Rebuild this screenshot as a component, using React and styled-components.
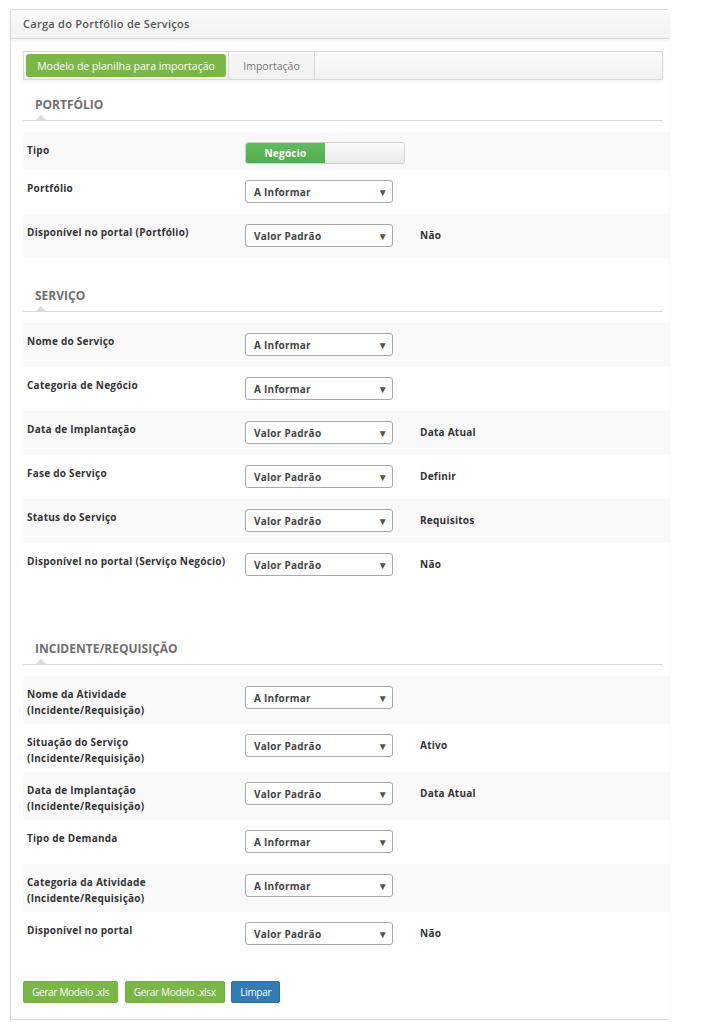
import styled, { createGlobalStyle } from "styled-components";

const GlobalStyle = createGlobalStyle`
    body {
        margin: 0;
        background: #fff;
        font-family: "Open Sans", "Liberation Sans", sans-serif;
    }
`;

const secoes = [
    {
        titulo: "PORTFÓLIO",
        topo: 17,
        linhas: [
            { label: "Tipo", toggle: true },
            { label: "Portfólio", valor: "A Informar" },
            { label: "Disponível no portal (Portfólio)", valor: "Valor Padrão", extra: "Não" },
        ],
    },
    {
        titulo: "SERVIÇO",
        topo: 30,
        linhas: [
            { label: "Nome do Serviço", valor: "A Informar" },
            { label: "Categoria de Negócio", valor: "A Informar" },
            { label: "Data de Implantação", valor: "Valor Padrão", extra: "Data Atual" },
            { label: "Fase do Serviço", valor: "Valor Padrão", extra: "Definir" },
            { label: "Status do Serviço", valor: "Valor Padrão", extra: "Requisitos" },
            { label: "Disponível no portal (Serviço Negócio)", valor: "Valor Padrão", extra: "Não" },
        ],
    },
    {
        titulo: "INCIDENTE/REQUISIÇÃO",
        topo: 54,
        linhas: [
            { label: ["Nome da Atividade", "(Incidente/Requisição)"], valor: "A Informar" },
            { label: ["Situação do Serviço", "(Incidente/Requisição)"], valor: "Valor Padrão", extra: "Ativo" },
            { label: ["Data de Implantação", "(Incidente/Requisição)"], valor: "Valor Padrão", extra: "Data Atual" },
            { label: "Tipo de Demanda", valor: "A Informar" },
            { label: ["Categoria da Atividade", "(Incidente/Requisição)"], valor: "A Informar" },
            { label: "Disponível no portal", valor: "Valor Padrão", extra: "Não" },
        ],
    },
];

function Linha({ linha, cinza }) {
    const partes = Array.isArray(linha.label) ? linha.label : [linha.label];
    return (
        <Row $cinza={cinza}>
            <Label>
                {partes.map((p) => <span key={p}>{p}</span>)}
            </Label>
            {linha.toggle ? (
                <Toggle>
                    <ToggleOn>Negócio</ToggleOn>
                    <ToggleOff />
                </Toggle>
            ) : (
                <Select>
                    <span>{linha.valor}</span>
                    <Seta>▼</Seta>
                </Select>
            )}
            {linha.extra && <Extra>{linha.extra}</Extra>}
        </Row>
    );
}

export default function App() {
    return (
        <>
            <GlobalStyle />
            <Painel>
                <Cabecalho>Carga do Portfólio de Serviços</Cabecalho>
                <Corpo>
                    <Abas>
                        <Aba>
                            <AbaBotao $ativa $largura={200}>Modelo de planilha para importação</AbaBotao>
                        </Aba>
                        <Aba>
                            <AbaBotao $largura={81}>Importação</AbaBotao>
                        </Aba>
                    </Abas>
                    {secoes.map((s) => (
                        <section key={s.titulo}>
                            <TituloSecao $topo={s.topo}>{s.titulo}</TituloSecao>
                            <Linhas>
                                {s.linhas.map((l, i) => (
                                    <Linha key={i} linha={l} cinza={i % 2 === 0} />
                                ))}
                            </Linhas>
                        </section>
                    ))}
                    <Botoes>
                        <Botao>Gerar Modelo .xls</Botao>
                        <Botao>Gerar Modelo .xlsx</Botao>
                        <Botao $azul>Limpar</Botao>
                    </Botoes>
                </Corpo>
            </Painel>
        </>
    );
}

const Painel = styled.div`
    margin: 9px 0 0 10px;
    width: 658px;
    border-left: 1px solid #dcdcdc;
    border-bottom: 1px solid #dcdcdc;
    box-shadow: 0 2px 3px rgba(0, 0, 0, 0.06);
    background: #fff;
`;

const Cabecalho = styled.div`
    height: 28px;
    line-height: 28px;
    padding-left: 12px;
    border-top: 1px solid #dcdcdc;
    border-bottom: 1px solid #d6d6d6;
    background: linear-gradient(#fafafa, #f2f2f2);
    box-shadow: 0 2px 3px rgba(0, 0, 0, 0.05);
    color: #555;
    font-size: 11px;
    font-weight: 600;
    letter-spacing: 0.27px;
`;

const Corpo = styled.div`
    padding: 12px 6px 16px 12px;
`;

const Abas = styled.div`
    display: flex;
    height: 27px;
    border: 1px solid #d8d8d8;
    background: linear-gradient(#fbfbfb, #f1f1f1);
    box-shadow: 0 2px 3px rgba(0, 0, 0, 0.05);
`;

const Aba = styled.div`
    display: flex;
    padding: 2px;
    border-right: 1px solid #d8d8d8;
`;

const AbaBotao = styled.div`
    display: flex;
    align-items: center;
    justify-content: center;
    width: ${(p) => p.$largura}px;
    border-radius: ${(p) => (p.$ativa ? "3px" : "0")};
    background: ${(p) => (p.$ativa ? "#7ab648" : "#f3f3f3")};
    color: ${(p) => (p.$ativa ? "#fff" : "#777")};
    font-size: 10.5px;
`;

const TituloSecao = styled.h3`
    position: relative;
    margin: ${(p) => p.$topo}px 0 0;
    padding: 0 0 7px 12px;
    border-bottom: 1px solid #dcdcdc;
    font-size: 12px;
    line-height: 16px;
    font-weight: 700;
    color: #6f6f6f;

    &::after {
        content: "";
        position: absolute;
        left: 13px;
        bottom: 0;
        border: 5px solid transparent;
        border-bottom: 5px solid #dcdcdc;
        border-top: 0;
    }
`;

const Linhas = styled.div`
    margin: 11px -6px 0 0;
`;

const Row = styled.div`
    display: grid;
    grid-template-columns: 222px 148px auto;
    align-items: start;
    padding: 10px 0 6px;
    background: ${(p) => (p.$cinza ? "#f9f9f9" : "#fff")};
`;

const Label = styled.div`
    display: flex;
    flex-direction: column;
    padding-left: 4px;
    font-size: 10px;
    line-height: 16px;
    font-weight: 700;
    letter-spacing: 0.25px;
    color: #333;
`;

const Select = styled.div`
    display: flex;
    align-items: center;
    justify-content: space-between;
    box-sizing: border-box;
    height: 23px;
    margin-bottom: 5px;
    padding: 0 4px 0 8px;
    border: 1px solid #a9a9a9;
    border-radius: 3px;
    background: #fff;
    font-size: 10px;
    font-weight: 700;
    letter-spacing: 0.25px;
    color: #444;
`;

const Seta = styled.span`
    font-size: 10px;
    color: #555;
`;

const Extra = styled.div`
    height: 23px;
    line-height: 23px;
    padding-left: 27px;
    font-size: 10px;
    font-weight: 700;
    letter-spacing: 0.25px;
    color: #333;
`;

const Toggle = styled.div`
    display: flex;
    width: 160px;
    height: 22px;
    box-sizing: border-box;
    border: 1px solid #cfcfcf;
    border-radius: 3px;
    overflow: hidden;
`;

const ToggleOn = styled.div`
    width: 79px;
    display: flex;
    align-items: center;
    justify-content: center;
    background: linear-gradient(#62bd60, #4fab4c);
    color: #fff;
    font-size: 10px;
    font-weight: 700;
    letter-spacing: 0.25px;
`;

const ToggleOff = styled.div`
    flex: 1;
    background: linear-gradient(#fbfbfb, #e9e9e9);
`;

const Botoes = styled.div`
    display: flex;
    gap: 6.5px;
    margin-top: 25px;
`;

const Botao = styled.button`
    height: 22px;
    padding: 0 8px;
    border: 1px solid ${(p) => (p.$azul ? "#2e6da4" : "#73ad42")};
    border-radius: 2px;
    background: ${(p) => (p.$azul ? "#337ab7" : "#7ab648")};
    color: #fff;
    font-family: "Open Sans", "Liberation Sans", sans-serif;
    font-size: 10px;
    letter-spacing: -0.3px;
`;
